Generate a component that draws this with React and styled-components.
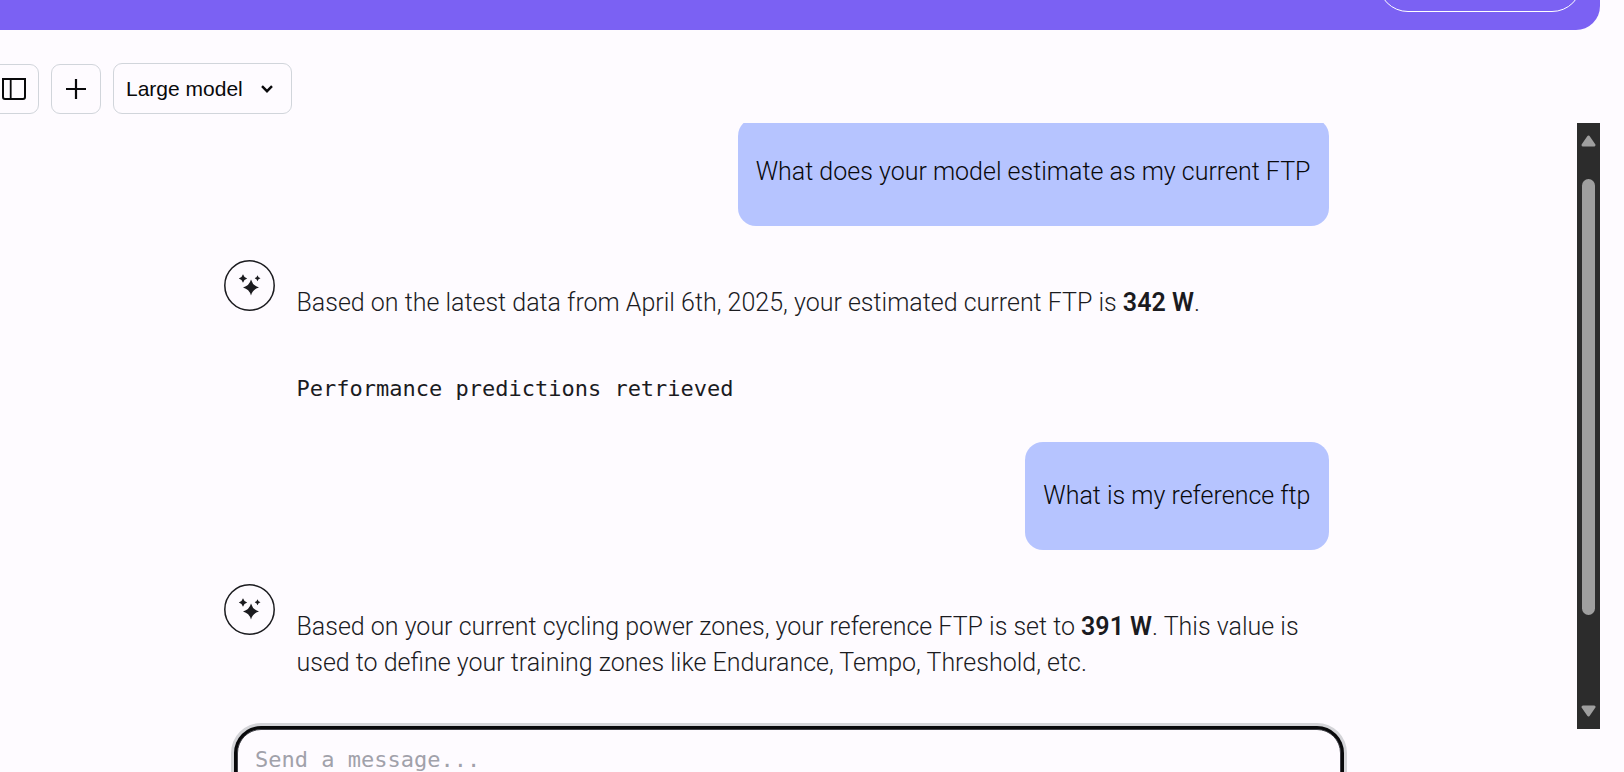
import React from 'react'
import styled, { createGlobalStyle } from 'styled-components'

const GlobalStyle = createGlobalStyle`
  * {
    box-sizing: border-box;
  }
  body {
    margin: 0;
    background: #fefbff;
    color: #1b1b1f;
    font-family: Roboto, sans-serif;
  }
`

const Page = styled.div`
  display: flex;
  flex-direction: column;
  height: 100vh;
  padding-right: 24px;
  overflow: hidden;
`

const Header = styled.header`
  display: flex;
  flex: none;
  justify-content: flex-end;
  align-items: flex-end;
  height: 30px;
  padding: 0 18px 18px;
  overflow: hidden;
  background: #7b61f3;
  border-bottom-right-radius: 24px;
`

const HeaderButton = styled.button`
  flex: none;
  width: 204px;
  height: 60px;
  background: transparent;
  border: 1px solid white;
  border-radius: 30px;
`

const Toolbar = styled.div`
  display: flex;
  flex: none;
  align-items: flex-end;
  gap: 12px;
  margin: 33px 0 9px -11px;
`

const IconButton = styled.button`
  display: flex;
  justify-content: center;
  align-items: center;
  width: 50px;
  height: 50px;
  padding: 0;
  color: #09090b;
  background: transparent;
  border: 1px solid #d1d5db;
  border-radius: 9px;
`

const SelectWrap = styled.div`
  display: grid;
  align-items: center;
  > * {
    grid-area: 1 / 1;
  }
  svg {
    justify-self: end;
    margin-right: 19px;
    pointer-events: none;
  }
`

const Select = styled.select`
  appearance: none;
  width: 179px;
  height: 51px;
  padding: 0 12px;
  color: #09090b;
  background: transparent;
  border: 1px solid #d1d5db;
  border-radius: 9px;
  font-family: 'Liberation Sans', Arial, sans-serif;
  font-size: 21px;
`

const Chat = styled.main`
  display: flex;
  flex: 1;
  min-height: 0;
`

const Log = styled.div`
  display: flex;
  flex: 1;
  flex-direction: column;
  justify-content: flex-end;
  align-items: center;
  overflow: hidden;
`

const Messages = styled.div`
  display: flex;
  flex-direction: column;
  gap: 34px;
  width: 100%;
  max-width: 1152px;
  padding: 0 36px 48px 11px;
  font-size: 25px;
  font-weight: 300;
  line-height: 36px;
`

const Bubble = styled.p`
  align-self: flex-end;
  margin: 0;
  padding: 36px 18px;
  color: #09090b;
  background: #b6c4ff;
  border-radius: 18px;
`

const Reply = styled.article`
  display: flex;
  gap: 22px;
`

const Avatar = styled.div`
  display: flex;
  flex: none;
  width: 51px;
  height: 51px;
`

const ReplyBody = styled.div`
  padding-top: 25px;
  p {
    margin: 0;
  }
  strong {
    font-weight: 600;
  }
`

const ToolResult = styled.pre`
  margin: 48px 0 0;
  font-family: 'DejaVu Sans Mono', monospace;
  font-size: 22px;
  line-height: 39px;
`

const ScrollTrack = styled.div`
  display: flex;
  flex: none;
  flex-direction: column;
  align-items: center;
  width: 23px;
  padding: 12px 0;
  background: #2c2c2c;
`

const ScrollSpace = styled.div`
  display: flex;
  flex: 1;
  align-items: flex-start;
  padding: 32px 0 90px;
`

const ScrollThumb = styled.div`
  width: 13px;
  height: 100%;
  background: #9f9f9f;
  border-radius: 7px;
`

const Composer = styled.form`
  display: flex;
  flex: none;
  justify-content: center;
  height: 43px;
  padding-right: 22px;
`

const MessageInput = styled.textarea`
  flex: none;
  width: 100%;
  max-width: 1104px;
  height: 120px;
  padding: 12px 17px;
  background: #fefbff;
  border: 1px solid #3f3f46;
  border-radius: 24px;
  box-shadow: 0 0 0 3px #09090b, 0 0 0 6px #d4d4d8;
  outline: none;
  resize: none;
  font-family: 'DejaVu Sans Mono', monospace;
  font-size: 22px;
  line-height: 36px;
  &::placeholder {
    color: #a1a1aa;
  }
`

const SidebarIcon = () => (
  <svg width="24" height="22" viewBox="0 0 24 22" fill="none" stroke="currentColor" strokeWidth="2">
    <path d="M1 1H23V19Q23 21 21 21H3Q1 21 1 19Z" />
    <path d="M8.7 1V21" strokeWidth="1.8" />
  </svg>
)

const PlusIcon = () => (
  <svg width="20" height="20" viewBox="0 0 20 20" stroke="currentColor" strokeWidth="2.2">
    <path d="M10 0V20M0 10H20" />
  </svg>
)

const ChevronIcon = () => (
  <svg width="12" height="8" viewBox="0 0 12 8" fill="none" stroke="#09090b" strokeWidth="2.4">
    <path d="M1 1.2L6 6.2L11 1.2" />
  </svg>
)

const SparkleAvatar = () => (
  <Avatar>
    <svg width="51" height="51" viewBox="0 0 51 51" fill="#1b1b1f">
      <circle cx="25.5" cy="25.5" r="24.7" fill="none" stroke="#1b1b1f" strokeWidth="1.5" />
      <path d="M27 19.5Q28.7 25.8 35 27.5Q28.7 29.2 27 35.5Q25.3 29.2 19 27.5Q25.3 25.8 27 19.5Z" />
      <path d="M19 14.3Q19.9 17.6 23.2 18.5Q19.9 19.4 19 22.7Q18.1 19.4 14.8 18.5Q18.1 17.6 19 14.3Z" />
      <path d="M33.5 15.3Q34.1 17.7 36.5 18.3Q34.1 18.9 33.5 21.3Q32.9 18.9 30.5 18.3Q32.9 17.7 33.5 15.3Z" />
    </svg>
  </Avatar>
)

const Triangle = ({ d }) => (
  <svg width="15" height="12" viewBox="0 0 15 12" fill="#9f9f9f" stroke="#9f9f9f" strokeWidth="3" strokeLinejoin="round">
    <path d={d} />
  </svg>
)

const App = () => {
  return (
    <>
      <GlobalStyle />
      <Page>
        <Header>
          <HeaderButton type='button' aria-label='Account' />
        </Header>
        <Toolbar>
          <IconButton type='button' aria-label='Toggle sidebar'><SidebarIcon /></IconButton>
          <IconButton type='button' aria-label='New chat'><PlusIcon /></IconButton>
          <SelectWrap>
            <Select aria-label='Model'>
              <option>Large model</option>
            </Select>
            <ChevronIcon />
          </SelectWrap>
        </Toolbar>
        <Chat>
          <Log>
            <Messages>
              <Bubble>What does your model estimate as my current FTP</Bubble>
              <Reply>
                <SparkleAvatar />
                <ReplyBody>
                  <p>Based on the latest data from April 6th, 2025, your estimated current FTP is <strong>342 W</strong>.</p>
                  <ToolResult>Performance predictions retrieved</ToolResult>
                </ReplyBody>
              </Reply>
              <Bubble>What is my reference ftp</Bubble>
              <Reply>
                <SparkleAvatar />
                <ReplyBody>
                  <p>Based on your current cycling power zones, your reference FTP is set to <strong>391 W</strong>. This value is used to define your training zones like Endurance, Tempo, Threshold, etc.</p>
                </ReplyBody>
              </Reply>
            </Messages>
          </Log>
          <ScrollTrack>
            <Triangle d="M7.5 2L13 10H2Z" />
            <ScrollSpace><ScrollThumb /></ScrollSpace>
            <Triangle d="M7.5 10L13 2H2Z" />
          </ScrollTrack>
        </Chat>
        <Composer>
          <MessageInput aria-label='Message' placeholder='Send a message...' />
        </Composer>
      </Page>
    </>
  )
}

export default App
